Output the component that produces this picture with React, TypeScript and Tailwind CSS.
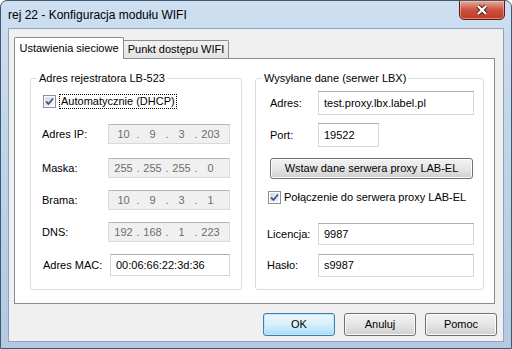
import type { ReactNode } from "react";

function CheckBox() {
  return (
    <div className="w-[13px] h-[13px] border border-[#8f8f8f] bg-white p-px shrink-0">
      <div className="w-full h-full bg-gradient-to-br from-[#d6d9de] to-[#f8f8f8] flex items-center justify-center">
        <svg width="9" height="9" viewBox="0 0 9 9">
          <path d="M1 4.5 L3.5 7 L8 1.5" fill="none" stroke="#3a5796" strokeWidth="1.8" />
        </svg>
      </div>
    </div>
  );
}

function TextBox({ value, className }: { value: string; className: string }) {
  return (
    <div
      className={`bg-white border border-[#d3d7de] border-t-[#abadb3] flex items-center pl-[5px] text-black ${className}`}
    >
      {value}
    </div>
  );
}

function IpBox({ parts }: { parts: string[] }) {
  return (
    <div className="w-[122px] h-[20px] bg-[#f0f0f0] border border-[#d9d9d9] border-t-[#b7b7b7] flex items-center pl-[2px] text-[#6d6d6d]">
      {parts.map((p, i) => (
        <div key={i} className="flex items-center">
          {i > 0 && <span className="w-[4px] text-center">.</span>}
          <span className="w-[25px] text-center">{p}</span>
        </div>
      ))}
    </div>
  );
}

function Row({ label, mt, children }: { label: string; mt: string; children: ReactNode }) {
  return (
    <div className={`flex items-center ${mt}`}>
      <span className="w-[66px] shrink-0">{label}</span>
      {children}
    </div>
  );
}

function WinButton({ label, focused }: { label: string; focused?: boolean }) {
  return (
    <button
      className={
        focused
          ? "w-[72px] h-[23px] rounded-[3px] border border-[#3c7fb1] bg-gradient-to-b from-[#eaf6fd] via-[#d9f0fc] to-[#a7d9f5] shadow-[inset_0_0_0_1px_#c0e6fb]"
          : "w-[72px] h-[23px] rounded-[3px] border border-[#707070] bg-gradient-to-b from-[#f2f2f2] via-[#e6e6e6] to-[#cfcfcf] shadow-[inset_0_0_0_1px_#fcfcfc]"
      }
    >
      {label}
    </button>
  );
}

export default function App() {
  return (
    <div className="w-[512px] h-[349px] flex flex-col rounded-t-[7px] border border-[#45576b] bg-gradient-to-b from-[#cddff1] via-[#bed3e9] to-[#b3c9e1] font-['Liberation_Sans',Arial,sans-serif] text-[11px] text-black whitespace-nowrap overflow-hidden">
      {/* Title bar */}
      <div className="h-[27px] flex items-start justify-between shrink-0">
        <span className="ml-[7px] mt-[8px] text-[12px] text-black leading-none">
          rej 22 - Konfiguracja modułu WIFI
        </span>
        <div className="mr-[6px] -mt-px w-[46px] h-[20px] rounded-b-[5px] border border-[#5b1d17] bg-gradient-to-b from-[#e9a99b] via-[#c9503f] to-[#c33a24] flex items-center justify-center shadow-[inset_0_0_0_1px_rgba(255,210,200,0.5)]">
          <svg width="14" height="12" viewBox="0 0 14 12">
            <path d="M3 2 L11 10 M11 2 L3 10" stroke="#4a1a14" strokeWidth="4" />
            <path d="M3 2 L11 10 M11 2 L3 10" stroke="white" strokeWidth="2.4" />
          </svg>
        </div>
      </div>

      {/* Client area */}
      <div className="flex-1 mx-[7px] mb-[6px] border border-[#8ea3b9] bg-[#f0f0f0] flex flex-col pl-[5px] pr-[6px] pt-[8px] pb-[5px]">
        {/* Tabs */}
        <div className="flex items-end h-[21px] shrink-0">
          <div className="relative z-10 -mb-px w-[110px] h-[22px] bg-white border border-b-0 border-[#898c95] rounded-t-[2px] flex items-center justify-center pb-px">
            Ustawienia sieciowe
          </div>
          <div className="w-[105px] h-[18px] border border-l-0 border-b-0 border-[#898c95] rounded-tr-[2px] bg-gradient-to-b from-[#f2f2f2] to-[#e3e3e3] flex items-center justify-center">
            Punkt dostępu WIFI
          </div>
        </div>

        {/* Tab panel */}
        <div className="h-[246px] mr-[2px] bg-white border border-[#898c95] flex pl-[15px] pt-[12px] gap-[13px]">
          <fieldset className="w-[212px] h-[219px] border border-[#d5dfe5] rounded-[3px] px-px">
            <legend className="ml-[5px] px-[2px] leading-[14px]">Adres rejestratora LB-523</legend>
            <div className="flex flex-col pl-[10px]">
              <div className="flex items-center mt-[9px] h-[14px] gap-[3px] pl-px">
                <CheckBox />
                <span className="border border-dotted border-black px-px leading-[13px]">Automatycznie (DHCP)</span>
              </div>
              <Row label="Adres IP:" mt="mt-[16px]">
                <IpBox parts={["10", "9", "3", "203"]} />
              </Row>
              <Row label="Maska:" mt="mt-[14px]">
                <IpBox parts={["255", "255", "255", "0"]} />
              </Row>
              <Row label="Brama:" mt="mt-[12px]">
                <IpBox parts={["10", "9", "3", "1"]} />
              </Row>
              <Row label="DNS:" mt="mt-[12px]">
                <IpBox parts={["192", "168", "1", "223"]} />
              </Row>
              <div className="flex items-center mt-[12px]">
                <span className="w-[68px] pl-px shrink-0">Adres MAC:</span>
                <TextBox value="00:06:66:22:3d:36" className="w-[120px] h-[22px]" />
              </div>
            </div>
          </fieldset>

          <fieldset className="w-[229px] h-[219px] border border-[#d5dfe5] rounded-[3px] px-px">
            <legend className="ml-[5px] px-[2px] leading-[14px]">Wysyłane dane (serwer LBX)</legend>
            <div className="flex flex-col pl-[13px]">
              <div className="flex items-center mt-[6px]">
                <span className="w-[48px] shrink-0">Adres:</span>
                <TextBox value="test.proxy.lbx.label.pl" className="w-[156px] h-[24px]" />
              </div>
              <div className="flex items-center mt-[8px]">
                <span className="w-[48px] shrink-0">Port:</span>
                <TextBox value="19522" className="w-[61px] h-[24px]" />
              </div>
              <button className="mt-[11px] w-[203px] h-[21px] rounded-[3px] border border-[#707070] bg-gradient-to-b from-[#f2f2f2] via-[#e6e6e6] to-[#cfcfcf] shadow-[inset_0_0_0_1px_#fcfcfc]">
                Wstaw dane serwera proxy LAB-EL
              </button>
              <div className="flex items-center mt-[12px] h-[13px] gap-[3px] -ml-[2px]">
                <CheckBox />
                <span>Połączenie do serwera proxy LAB-EL</span>
              </div>
              <div className="flex items-center mt-[19px] -ml-[3px]">
                <span className="w-[51px] shrink-0">Licencja:</span>
                <TextBox value="9987" className="w-[156px] h-[22px]" />
              </div>
              <div className="flex items-center mt-[9px] -ml-[3px]">
                <span className="w-[51px] shrink-0">Hasło:</span>
                <TextBox value="s9987" className="w-[156px] h-[23px]" />
              </div>
            </div>
          </fieldset>
        </div>

        {/* Dialog buttons */}
        <div className="flex justify-end gap-[9px] mt-[9px]">
          <WinButton label="OK" focused />
          <WinButton label="Anuluj" />
          <WinButton label="Pomoc" />
        </div>
      </div>
    </div>
  );
}
